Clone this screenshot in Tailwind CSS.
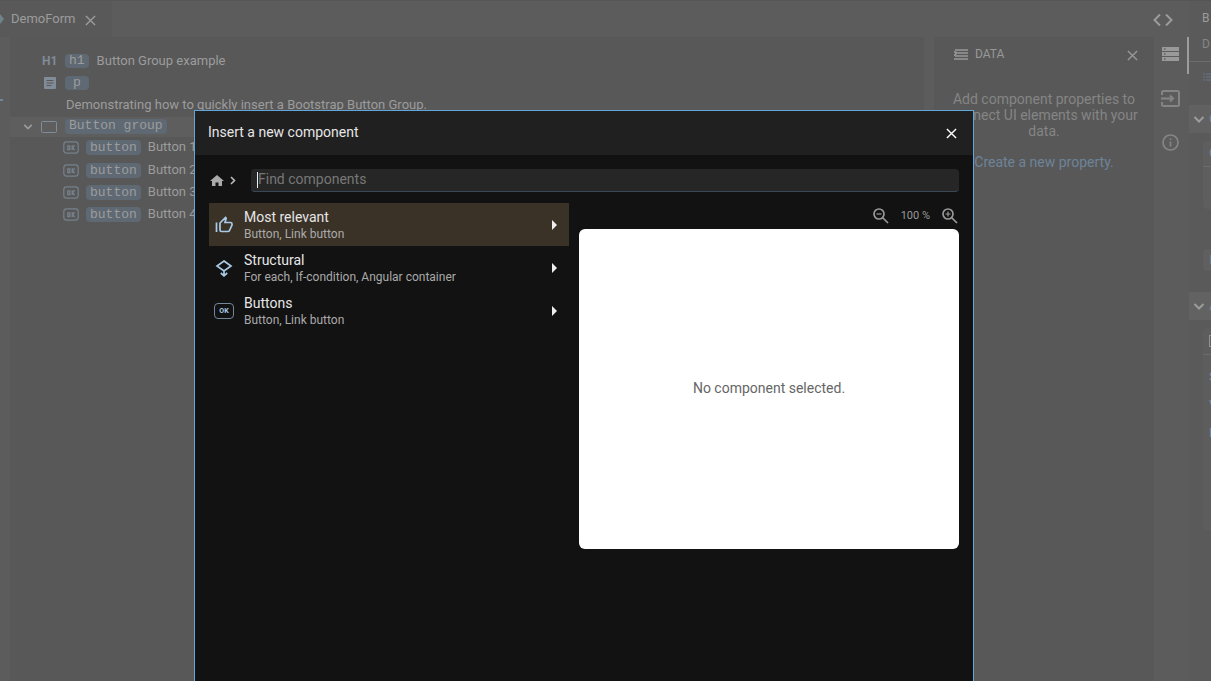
<!DOCTYPE html>
<html lang="en">
<head>
<meta charset="utf-8">
<title>DemoForm</title>
<script src="https://cdn.jsdelivr.net/npm/@tailwindcss/browser@4"></script>
</head>
<body class="relative h-screen overflow-hidden bg-[#5c5c5c] font-[Roboto,sans-serif] text-[13px] text-[#9c9c9c]">
<svg class="hidden">
  <symbol id="ok" viewBox="0 0 20 16"><rect x="1" y="1" width="18" height="14" rx="3.5" fill="none" stroke="currentColor" stroke-width="1.5"/><path d="M6 6h2.500v4.500H6zM11.500 5.200v6M14.500 5.200l-2.500 3 2.500 3" fill="none" stroke="currentColor" stroke-width="1.700"/></symbol>
  <symbol id="x" viewBox="0 0 12 12"><path d="M1 1l10 10M11 1L1 11" fill="none" stroke="currentColor" stroke-width="1.500"/></symbol>
  <symbol id="down" viewBox="0 0 12 8"><path d="M1.500 1.500L6 6l4.500-4.500" fill="none" stroke="currentColor" stroke-width="2"/></symbol>
</svg>

<div class="flex h-full border-t border-[#555555]">
  <div class="flex min-w-0 flex-1 flex-col">
    <header class="flex h-9 shrink-0 items-center">
      <div class="flex h-full w-28 items-center bg-[#595959]">
        <svg class="h-3 w-1" viewBox="0 0 4 12"><path d="M0 1v10l4-5z" fill="#6f8488"/></svg>
        <span class="ml-[7px] w-[74px]">DemoForm</span>
        <button aria-label="Close tab"><svg class="mt-0.5 size-[11px]"><use href="#x"/></svg></button>
      </div>
      <button class="mr-4 ml-auto" aria-label="Code"><svg class="mt-0.5 h-3 w-5" viewBox="0 0 20 12" fill="none" stroke="currentColor" stroke-width="2"><path d="M7 .5L1.500 6 7 11.500M13 .5L18.500 6 13 11.500"/></svg></button>
    </header>

    <div class="flex min-h-0 flex-1">
      <div class="flex w-2.5 shrink-0 items-start pt-[62px]"><span class="h-0.5 w-[3px] bg-[#71869a]"></span></div>
      <main class="min-w-0 flex-1 bg-[#585858] pt-[13px] whitespace-nowrap">
        <div class="flex h-[22px] items-center">
          <b class="ml-8 w-[23px] text-[12px] text-[#808c97]">H1</b>
          <span class="mr-2 h-[14px] rounded bg-[#5f6973] px-1 font-['Liberation_Mono',monospace] leading-[13px]">h1</span>
          Button Group example
        </div>
        <div class="flex h-[22px] items-center">
          <svg class="mr-[9px] ml-[34px] size-3" viewBox="0 0 12 12"><rect width="12" height="12" rx="1" fill="#808c97"/><path d="M2.500 3.500h7M2.500 6h7M2.500 8.500h5" stroke="#585858"/></svg>
          <span class="h-[14px] rounded bg-[#5f6973] px-2 font-['Liberation_Mono',monospace] leading-[13px]">p</span>
        </div>
        <p class="ml-14 h-[22px] leading-[22px]">Demonstrating how to quickly insert a Bootstrap Button Group.</p>
        <div class="mt-px flex h-5 items-center bg-[#5e5e5e]">
          <button class="mr-2 ml-[13px]" aria-label="Collapse"><svg class="h-2 w-2.5"><use href="#down"/></svg></button>
          <svg class="mr-2 h-3 w-4" viewBox="0 0 16 12"><rect x=".5" y=".5" width="15" height="11" rx="1" fill="none" stroke="#808c97"/></svg>
          <span class="mb-0.5 h-[15px] rounded bg-[#5f6973] px-1 font-['Liberation_Mono',monospace] leading-[14px]">Button group</span>
        </div>
        <div class="flex h-5 items-center"><svg class="mr-[7px] ml-[53px] h-[13px] w-4 text-[#75818c]"><use href="#ok"/></svg><span class="mr-[7px] h-[15px] rounded bg-[#5f6973] px-1 font-['Liberation_Mono',monospace] leading-[15px]">button</span>Button 1</div>
        <div class="mt-0.5 flex h-[22px] items-center"><svg class="mr-[7px] ml-[53px] h-[13px] w-4 text-[#75818c]"><use href="#ok"/></svg><span class="mr-[7px] h-[15px] rounded bg-[#5f6973] px-1 font-['Liberation_Mono',monospace] leading-[15px]">button</span>Button 2</div>
        <div class="flex h-[22px] items-center"><svg class="mr-[7px] ml-[53px] h-[13px] w-4 text-[#75818c]"><use href="#ok"/></svg><span class="mr-[7px] h-[15px] rounded bg-[#5f6973] px-1 font-['Liberation_Mono',monospace] leading-[15px]">button</span>Button 3</div>
        <div class="flex h-[22px] items-center"><svg class="mr-[7px] ml-[53px] h-[13px] w-4 text-[#75818c]"><use href="#ok"/></svg><span class="mr-[7px] h-[15px] rounded bg-[#5f6973] px-1 font-['Liberation_Mono',monospace] leading-[15px]">button</span>Button 4</div>
      </main>

      <aside class="ml-2.5 w-[220px] shrink-0 bg-[#585858] text-[#858585]">
        <div class="flex h-[34px] items-center pr-4 pl-5 text-[12px] text-[#989898]">
          <svg class="mr-[7px] h-[11px] w-[14px]" viewBox="0 0 14 11" fill="none" stroke="currentColor" stroke-width="1.600"><path d="M1 1h13M4 4h10M1 7h13M0 10h14M0 2.500L3 4 0 6.500"/></svg>
          DATA
          <button class="ml-auto" aria-label="Close data"><svg class="mt-0.5 size-[11px]"><use href="#x"/></svg></button>
        </div>
        <p class="mt-5 px-4 text-center text-[14px] leading-4">Add component properties to connect UI elements with your data.</p>
        <p class="mt-[15px] text-center text-[14px] leading-4"><a href="#" class="text-[#6d8498]">Create a new property.</a></p>
      </aside>

      <nav class="flex w-[35px] shrink-0 flex-col items-end text-[#858585]">
        <button class="flex h-[37px] w-full items-start border-r-2 border-[#9c9c9c] pt-2.5 pl-2" aria-label="Data"><svg class="h-[14px] w-[17px]" viewBox="0 0 17 14"><path d="M0 0h17v4H0zM0 5h17v4H0zM0 10h17v4H0z" fill="#999"/><path d="M2 1.500h1.500v1H2zM2 6.500h1.500v1H2zM2 11.500h1.500v1H2z" fill="#444"/></svg></button>
        <button class="mt-4 w-full pl-[7px]" aria-label="Inputs"><svg class="h-[17px] w-[19px]" viewBox="0 0 19 17" fill="none" stroke="currentColor" stroke-width="2"><path d="M1 5V2.500Q1 1 2.500 1h14Q18 1 18 2.500v12q0 1.500-1.500 1.500h-14Q1 16 1 14.500V12M0 8.500h12M9 5.500l3 3-3 3"/></svg></button>
        <button class="mt-[27px] w-full pl-2" aria-label="Information"><svg class="size-[17px]" viewBox="0 0 17 17" fill="none" stroke="currentColor" stroke-width="1.700"><circle cx="8.500" cy="8.500" r="7.500"/><path d="M8.500 7.500v5M8.500 4.500v1.500"/></svg></button>
      </nav>
    </div>
  </div>

  <aside class="w-[22px] shrink-0 overflow-hidden bg-[#5a5a5a]">
    <div class="h-[61px] border-b border-[#6c6c6c] pt-1 pl-[13px] text-[12px] leading-[26px]">B<br><span class="text-[#858585]">D</span></div>
    <svg class="mt-[11px] ml-[14px] h-2 w-2" viewBox="0 0 8 8"><path d="M0 1h2M3 1h5M0 4h2M3 4h5M0 7h2M3 7h5" stroke="#66798b"/></svg>
    <div class="mt-6 flex h-7 items-center overflow-hidden bg-[#616161] pl-1"><svg class="mr-1 h-[9px] w-3 shrink-0"><use href="#down"/></svg><span class="text-[#71869a]">C</span></div>
    <div class="mt-2 ml-[14px] h-[68px] rounded-l bg-[#5e5e5e]"><div class="h-[26px] border-b border-[#6b6b6b] pl-1.5 leading-[24px] text-[#71869a]">C</div></div>
    <div class="mt-10 ml-[14px] h-[22px] rounded-l bg-[#5f5f5f] pl-1.5 leading-[22px] text-[#66798b]">E</div>
    <div class="mt-[21px] flex h-7 items-center overflow-hidden bg-[#626262] pl-1"><svg class="mr-1 h-[9px] w-3 shrink-0"><use href="#down"/></svg><span class="text-[#71869a]">A</span></div>
    <div class="mt-2 ml-[14px] h-[202px] rounded-l bg-[#5d5d5d]">
      <div class="flex h-[27px] items-center border-b border-[#6b6b6b] pl-1.5"><span class="h-3 w-2 border-y border-l border-[#929292]"></span></div>
      <div class="pt-2 pl-1.5 leading-[28px] text-[#7089a0]">S<br>V<br>E</div>
    </div>
  </aside>
</div>

<section role="dialog" aria-labelledby="dialog-title" class="absolute top-[110px] bottom-0 left-[194px] w-[780px] border border-b-0 border-[#61a7dc] bg-[#121212] text-[14px] text-[#e6e6e6]">
  <header class="flex h-11 items-center justify-between bg-[#202020] pr-4 pl-[13px]">
    <h2 id="dialog-title" class="pb-0.5">Insert a new component</h2>
    <button aria-label="Close dialog" class="text-white"><svg class="size-[11px]"><use href="#x"/></svg></button>
  </header>
  <div class="flex items-center pt-[14px] pr-[14px] pl-[15px]">
    <button aria-label="Home"><svg class="h-[11px] w-[14px]" viewBox="0 0 14 11"><path d="M7 0L0 6h2v5h3.500V7.500h3V11H12V6h2z" fill="#aaa"/></svg></button>
    <svg class="mr-[15px] ml-1.5 h-[9px] w-1.5" viewBox="0 0 6 9"><path d="M1 1l3.500 3.500L1 8" fill="none" stroke="#bbb" stroke-width="1.600"/></svg>
    <div class="flex h-[23px] flex-1 items-center rounded border-b border-[#3b4855] bg-[#262626] pl-1.5">
      <span class="h-4 w-px bg-[#eee]"></span>
      <input type="text" aria-label="Find components" placeholder="Find components" class="w-full bg-transparent pb-0.5 outline-none placeholder:text-[#777]">
    </div>
  </div>
  <div class="flex gap-2.5 px-[14px] pt-[11px]">
    <div class="min-w-0 flex-1">
      <button class="flex h-[43px] w-full items-center bg-[#3a3227] pr-3 pl-1.5 text-left leading-4">
        <svg class="mr-[11px] size-[18px]" viewBox="0 0 18 18" fill="none" stroke="#a9cbe8" stroke-width="1.700"><path d="M1.500 6.500v9.500M5 7L10.500 1.500l.700.800L10 6.500h5.500q1.500 0 1.500 1.500v1L14.500 14.500q-.400 1-1.500 1H6.500Q5 15.500 5 14z"/></svg>
        <span class="flex-1 pt-px">Most relevant<br><span class="text-[12px] text-[#aaa]">Button, Link button</span></span>
        <svg class="h-2.5 w-[5px]" viewBox="0 0 5 10"><path d="M0 0l5 5-5 5z" fill="#eee"/></svg>
      </button>
      <button class="flex h-[43px] w-full items-center pr-3 pl-1.5 text-left leading-4">
        <svg class="mr-[11px] size-[18px]" viewBox="0 0 18 18" fill="none" stroke="#a9cbe8" stroke-width="1.700"><path d="M9 2l7 5-7 5-7-5zM9 12v4.500M5.800 14L9 16.800l3.200-2.800"/></svg>
        <span class="flex-1 pt-px">Structural<br><span class="text-[12px] text-[#aaa]">For each, If-condition, Angular container</span></span>
        <svg class="h-2.5 w-[5px]" viewBox="0 0 5 10"><path d="M0 0l5 5-5 5z" fill="#eee"/></svg>
      </button>
      <button class="flex h-[43px] w-full items-center pr-3 pl-[5px] text-left leading-4">
        <span class="mr-2.5 flex h-4 w-5 items-center justify-center rounded border border-[#718799] text-[7px] font-bold text-[#a9cbe8]">OK</span>
        <span class="flex-1 pt-px">Buttons<br><span class="text-[12px] text-[#aaa]">Button, Link button</span></span>
        <svg class="h-2.5 w-[5px]" viewBox="0 0 5 10"><path d="M0 0l5 5-5 5z" fill="#eee"/></svg>
      </button>
    </div>
    <div class="w-[380px]">
      <div class="flex h-[26px] items-center justify-end pr-px text-[11px] text-[#999]">
        <button aria-label="Zoom out"><svg class="size-4" viewBox="0 0 16 16" fill="none" stroke="currentColor" stroke-width="1.700"><circle cx="6" cy="6" r="5"/><path d="M9.500 9.500l5.500 5.500"/><path d="M3.500 6h5" stroke-width="1.200"/></svg></button>
        <span class="mx-3">100 %</span>
        <button aria-label="Zoom in"><svg class="size-4" viewBox="0 0 16 16" fill="none" stroke="currentColor" stroke-width="1.700"><circle cx="6" cy="6" r="5"/><path d="M9.500 9.500l5.500 5.500"/><path d="M3.500 6h5M6 3.500v5" stroke-width="1.200"/></svg></button>
      </div>
      <div class="flex h-80 items-center justify-center rounded-md bg-white pb-0.5 text-[#666]">No component selected.</div>
    </div>
  </div>
</section>
</body>
</html>
